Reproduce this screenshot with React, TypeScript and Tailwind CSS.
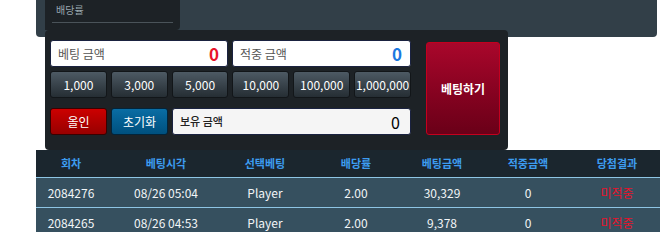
import React from 'react';

const chips = ['1,000', '3,000', '5,000', '10,000', '100,000', '1,000,000'];

const headers = ['회차', '베팅시각', '선택베팅', '배당률', '베팅금액', '적중금액', '당첨결과'];

const rows = [
  ['2084276', '08/26 05:04', 'Player', '2.00', '30,329', '0', '미적중'],
  ['2084265', '08/26 04:53', 'Player', '2.00', '9,378', '0', '미적중'],
];

const font = { fontFamily: '"Noto Sans CJK KR", "Noto Sans", sans-serif' };

const App: React.FC = () => {
  return (
    <div className="w-[660px] h-[232px] bg-white overflow-hidden" style={font}>
      {/* top strip */}
      <div className="ml-[36px] w-[621px] h-[37px] bg-[#323f48] rounded-b-[4px] pl-[9px]">
        <div className="w-[135px] h-[30px] bg-[#1d2226] rounded-br-[4px] px-[7px] pt-[2px]">
          <div className="pl-[4px] text-[10px] leading-[16px] text-[#9aa6ae]">배당률</div>
          <div className="mt-[4px] h-px bg-[#4a5359]" />
        </div>
      </div>

      {/* betting panel */}
      <div className="relative z-10 -mt-[7px] ml-[45px] w-[463px] h-[120px] bg-[#1d2226] rounded-[4px] pl-[5px] pt-[10px] flex gap-[15px]">
        <div className="w-[361px] flex flex-col">
          <div className="flex gap-[4px]">
            <div className="w-[178px] h-[27px] bg-white rounded-[3px] border border-[#1a2240] flex items-center justify-between pl-[7px] pr-[8px]">
              <span className="text-[12px] text-[#555]">베팅 금액</span>
              <span className="text-[17px] font-bold text-[#e8132b]">0</span>
            </div>
            <div className="w-[179px] h-[27px] bg-white rounded-[3px] border border-[#1a2240] flex items-center justify-between pl-[7px] pr-[8px]">
              <span className="text-[12px] text-[#555]">적중 금액</span>
              <span className="text-[17px] font-bold text-[#1c78e0]">0</span>
            </div>
          </div>
          <div className="mt-[4px] grid grid-cols-6 gap-[4px]">
            {chips.map((c) => (
              <div
                key={c}
                className="h-[27px] rounded-[3px] border border-[#121619] bg-gradient-to-b from-[#4d5a64] to-[#262e34] flex items-center justify-center text-[12px] text-white"
              >
                {c}
              </div>
            ))}
          </div>
          <div className="mt-[10px] flex gap-[4px] h-[27px]">
            <div className="w-[57px] rounded-[3px] border border-[#3a0000] bg-gradient-to-b from-[#cc0000] to-[#980000] flex items-center justify-center text-[12px] text-white">
              올인
            </div>
            <div className="w-[57px] rounded-[3px] border border-[#02243a] bg-gradient-to-b from-[#0a6da4] to-[#00507e] flex items-center justify-center text-[12px] text-white">
              초기화
            </div>
            <div className="flex-1 rounded-[3px] border border-[#1a2240] bg-[#f5f5f5] flex items-center justify-between pl-[7px] pr-[10px]">
              <span className="text-[11px] font-medium text-[#222]">보유 금액</span>
              <span className="text-[16px] text-black">0</span>
            </div>
          </div>
        </div>
        <div className="mt-[2px] w-[74px] h-[93px] rounded-[3px] border border-[#c4001e] bg-gradient-to-b from-[#a9072b] to-[#6a0018] flex items-center justify-center text-[12px] font-bold text-white">
          베팅하기
        </div>
      </div>

      {/* history table */}
      <div className="ml-[36px] w-[624px]">
        <div className="grid grid-cols-[70px_120px_78px_104px_68px_104px_74px] h-[27px] items-center bg-[#1b262e] text-[11px] font-bold text-[#3d9cf0]">
          {headers.map((h) => (
            <div key={h} className="text-center">
              {h}
            </div>
          ))}
        </div>
        {rows.map((r) => (
          <div
            key={r[0]}
            className="grid grid-cols-[70px_120px_78px_104px_68px_104px_74px] h-[30px] items-center bg-[#36505f] border-t border-[#8ec5e4] text-[12px] text-[#f2f5f7]"
          >
            {r.map((v, i) => (
              <div key={i} className={i === 6 ? 'text-center text-[#e8132b]' : 'text-center'}>
                {v}
              </div>
            ))}
          </div>
        ))}
      </div>
    </div>
  );
};

export default App;
